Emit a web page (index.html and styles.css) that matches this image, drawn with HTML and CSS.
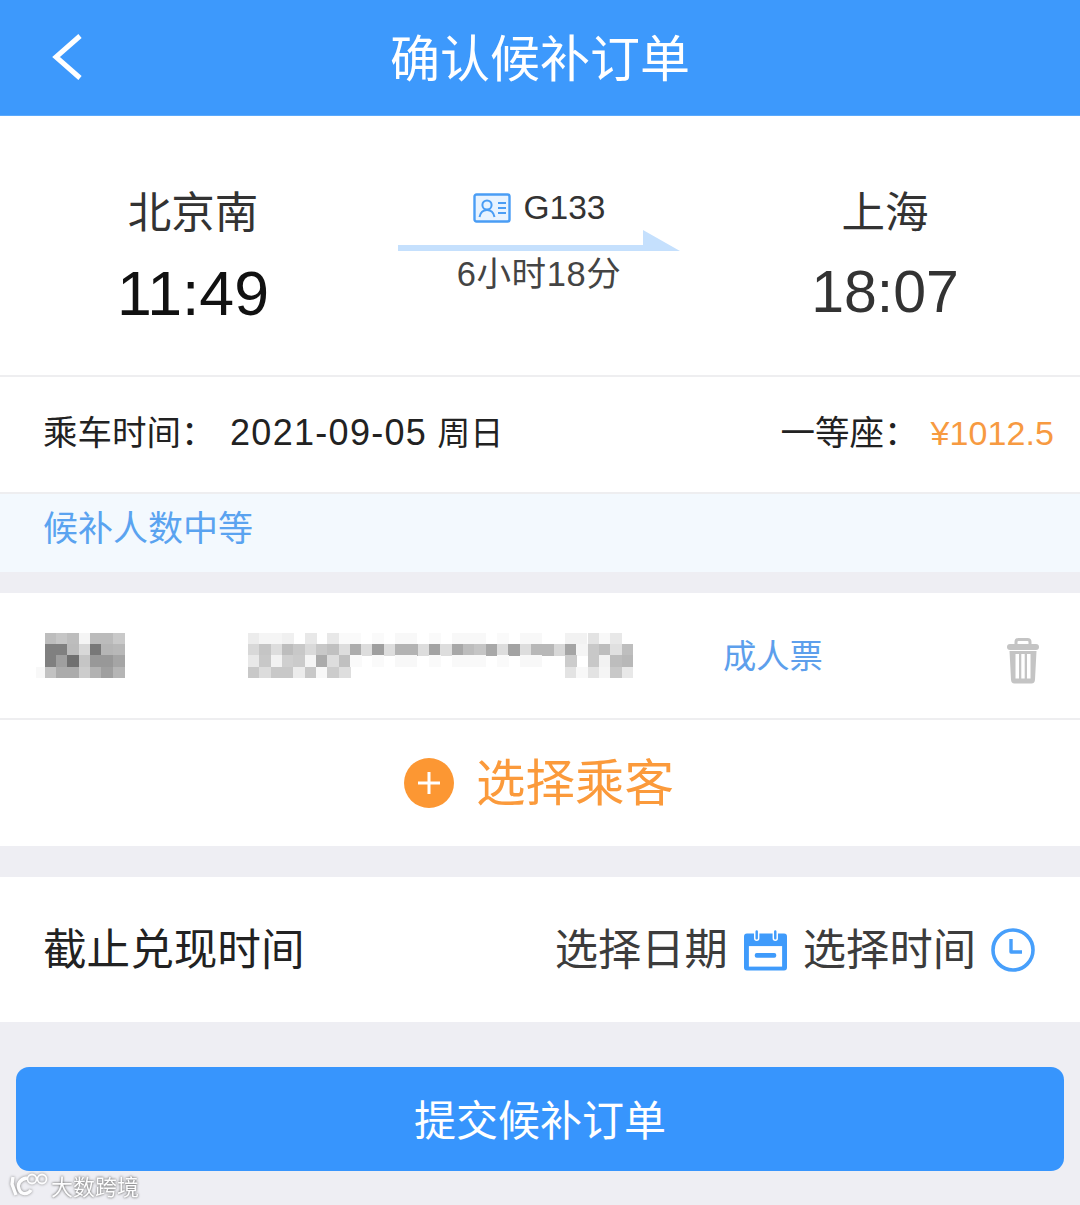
FILE: index.html
```
<!DOCTYPE html>
<html lang="zh-CN">
<head>
<meta charset="utf-8">
<title>确认候补订单</title>
<link rel="stylesheet" href="styles.css">
</head>
<body>
<div class="page">
  <header class="nav">
    <svg class="back" viewBox="0 0 32 46" width="32" height="46"><path d="M29 2 L5 23 L29 44" fill="none" stroke="#fff" stroke-width="5"/></svg>
    <h1 class="nav-title">确认候补订单</h1>
  </header>

  <section class="route">
    <div class="stop">
      <div class="stop-name">北京南</div>
      <div class="stop-time dark">11:49</div>
    </div>
    <div class="train">
      <div class="train-no">
        <svg class="id-icon" viewBox="0 0 38 30" width="38" height="30"><rect x="1.5" y="1.5" width="35" height="27" rx="2" fill="#e8f3ff" stroke="#4a9df5" stroke-width="2.4"/><circle cx="14" cy="12" r="4.6" fill="none" stroke="#4a9df5" stroke-width="2"/><path d="M6.5 24c1-5 4-7 7.500-7s6.500 2 7.500 7" fill="none" stroke="#4a9df5" stroke-width="2"/><path d="M25 10h8M25 15h8M25 20h8" stroke="#4a9df5" stroke-width="2"/></svg>
        <span>G133</span>
      </div>
      <svg class="arrow" viewBox="0 0 282 21" width="282" height="21"><path d="M0 15H245V0L282 21H0Z" fill="#c5e0fd"/></svg>
      <div class="duration">6小时18分</div>
    </div>
    <div class="stop">
      <div class="stop-name">上海</div>
      <div class="stop-time">18:07</div>
    </div>
  </section>

  <section class="ride">
    <div class="ride-date"><span class="label">乘车时间：</span><span class="date">2021-09-05</span><span class="week">周日</span></div>
    <div class="ride-seat"><span class="label">一等座：</span><span class="price">¥1012.5</span></div>
  </section>

  <div class="notice">候补人数中等</div>

  <section class="passenger">
    <svg class="mosaic name" viewBox="0 0 89 45" width="89" height="45">
      <rect x="-1" y="34" width="11" height="11" fill="#f8f8f8"/>
      <g>
        <rect x="9" y="0" width="12" height="12" fill="#bdbdbd"/><rect x="20" y="0" width="12" height="12" fill="#c6c6c6"/><rect x="31" y="0" width="12" height="12" fill="#bdbdbd"/><rect x="43" y="0" width="12" height="12" fill="#f5f5f5"/><rect x="54" y="0" width="12" height="12" fill="#bbb"/><rect x="65" y="0" width="12" height="12" fill="#bbb"/><rect x="77" y="0" width="12" height="12" fill="#c9c9c9"/>
        <rect x="9" y="11" width="12" height="12" fill="#808080"/><rect x="20" y="11" width="12" height="12" fill="#808080"/><rect x="31" y="11" width="12" height="12" fill="#bbb"/><rect x="43" y="11" width="12" height="12" fill="#d8d8d8"/><rect x="54" y="11" width="12" height="12" fill="#787878"/><rect x="65" y="11" width="12" height="12" fill="#b5b5b5"/><rect x="77" y="11" width="12" height="12" fill="#b8b8b8"/>
        <rect x="9" y="22" width="12" height="12" fill="#808080"/><rect x="20" y="22" width="12" height="12" fill="#9f9f9f"/><rect x="31" y="22" width="12" height="12" fill="#707070"/><rect x="43" y="22" width="12" height="12" fill="#c5c5c5"/><rect x="54" y="22" width="12" height="12" fill="#989898"/><rect x="65" y="22" width="12" height="12" fill="#989898"/><rect x="77" y="22" width="12" height="12" fill="#a5a5a5"/>
        <rect x="9" y="34" width="12" height="11" fill="#c2c2c2"/><rect x="20" y="34" width="12" height="11" fill="#ababab"/><rect x="31" y="34" width="12" height="11" fill="#ababab"/><rect x="43" y="34" width="12" height="11" fill="#ccc"/><rect x="54" y="34" width="12" height="11" fill="#b2b2b2"/><rect x="65" y="34" width="12" height="11" fill="#9f9f9f"/><rect x="77" y="34" width="12" height="11" fill="#b5b5b5"/>
      </g>
    </svg>
    <svg class="mosaic idno" viewBox="0 0 385 45" width="385" height="45">
      <g>
        <rect x="0" y="0" width="12" height="12" fill="#ececec"/><rect x="11" y="0" width="12" height="12" fill="#f5f5f5"/><rect x="23" y="0" width="12" height="12" fill="#f5f5f5"/><rect x="34" y="0" width="12" height="12" fill="#f0f0f0"/><rect x="57" y="0" width="12" height="12" fill="#e8e8e8"/><rect x="79" y="0" width="12" height="12" fill="#e8e8e8"/><rect x="91" y="0" width="22" height="12" fill="#fafafa"/><rect x="124" y="0" width="12" height="12" fill="#fafafa"/><rect x="147" y="0" width="22" height="12" fill="#f8f8f8"/><rect x="181" y="0" width="12" height="12" fill="#fafafa"/><rect x="204" y="0" width="34" height="12" fill="#f8f8f8"/><rect x="249" y="0" width="12" height="12" fill="#fafafa"/><rect x="272" y="0" width="22" height="12" fill="#f8f8f8"/><rect x="317" y="0" width="22" height="12" fill="#f2f2f2"/><rect x="340" y="0" width="12" height="12" fill="#e3e3e3"/><rect x="351" y="0" width="12" height="12" fill="#f8f8f8"/><rect x="362" y="0" width="12" height="12" fill="#e8e8e8"/>
        <rect x="0" y="11" width="12" height="12" fill="#d8d8d8"/><rect x="11" y="11" width="12" height="12" fill="#c5c5c5"/><rect x="23" y="11" width="12" height="12" fill="#ddd"/><rect x="34" y="11" width="12" height="12" fill="#bdbdbd"/><rect x="45" y="11" width="12" height="12" fill="#c8c8c8"/><rect x="57" y="11" width="12" height="12" fill="#dadada"/><rect x="68" y="11" width="12" height="12" fill="#c8c8c8"/><rect x="79" y="11" width="12" height="12" fill="#c0c0c0"/><rect x="91" y="11" width="12" height="12" fill="#ddd"/><rect x="102" y="11" width="12" height="12" fill="#adadad"/><rect x="113" y="11" width="12" height="12" fill="#ddd"/><rect x="124" y="11" width="12" height="12" fill="#9f9f9f"/><rect x="136" y="11" width="12" height="12" fill="#ddd"/><rect x="147" y="11" width="23" height="12" fill="#b3b3b3"/><rect x="170" y="11" width="12" height="12" fill="#ddd"/><rect x="181" y="11" width="12" height="12" fill="#a3a3a3"/><rect x="192" y="11" width="12" height="12" fill="#ddd"/><rect x="204" y="11" width="12" height="12" fill="#a8a8a8"/><rect x="215" y="11" width="12" height="12" fill="#bdbdbd"/><rect x="226" y="11" width="12" height="12" fill="#c5c5c5"/><rect x="238" y="11" width="12" height="12" fill="#a8a8a8"/><rect x="249" y="11" width="12" height="12" fill="#ddd"/><rect x="260" y="11" width="12" height="12" fill="#a3a3a3"/><rect x="272" y="11" width="12" height="12" fill="#ddd"/><rect x="283" y="11" width="23" height="12" fill="#b8b8b8"/><rect x="306" y="11" width="12" height="12" fill="#d8d8d8"/><rect x="317" y="11" width="12" height="12" fill="#a5a5a5"/><rect x="328" y="11" width="12" height="12" fill="#f5f5f5"/><rect x="340" y="11" width="12" height="12" fill="#c8c8c8"/><rect x="351" y="11" width="12" height="12" fill="#bdbdbd"/><rect x="362" y="11" width="12" height="12" fill="#e0e0e0"/><rect x="374" y="11" width="11" height="12" fill="#bebebe"/>
        <rect x="0" y="22" width="12" height="12" fill="#e8e8e8"/><rect x="11" y="22" width="12" height="12" fill="#c8c8c8"/><rect x="23" y="22" width="12" height="12" fill="#f2f2f2"/><rect x="34" y="22" width="12" height="12" fill="#cfcfcf"/><rect x="45" y="22" width="12" height="12" fill="#cbcbcb"/><rect x="57" y="22" width="12" height="12" fill="#f5f5f5"/><rect x="68" y="22" width="12" height="12" fill="#ababab"/><rect x="79" y="22" width="12" height="12" fill="#ddd"/><rect x="91" y="22" width="12" height="12" fill="#c0c0c0"/><rect x="102" y="22" width="12" height="12" fill="#fafafa"/><rect x="124" y="22" width="12" height="12" fill="#fafafa"/><rect x="147" y="22" width="22" height="12" fill="#f8f8f8"/><rect x="181" y="22" width="12" height="12" fill="#fafafa"/><rect x="204" y="22" width="34" height="12" fill="#f9f9f9"/><rect x="249" y="22" width="12" height="12" fill="#fafafa"/><rect x="272" y="22" width="22" height="12" fill="#f8f8f8"/><rect x="317" y="22" width="12" height="12" fill="#ccc"/><rect x="340" y="22" width="12" height="12" fill="#c8c8c8"/><rect x="351" y="22" width="12" height="12" fill="#f2f2f2"/><rect x="362" y="22" width="12" height="12" fill="#bdbdbd"/><rect x="374" y="22" width="11" height="12" fill="#b8b8b8"/>
        <rect x="0" y="34" width="12" height="11" fill="#c8c8c8"/><rect x="11" y="34" width="12" height="11" fill="#dcdcdc"/><rect x="23" y="34" width="23" height="11" fill="#c8c8c8"/><rect x="45" y="34" width="12" height="11" fill="#ececec"/><rect x="57" y="34" width="12" height="11" fill="#c8c8c8"/><rect x="68" y="34" width="12" height="11" fill="#f8f8f8"/><rect x="79" y="34" width="12" height="11" fill="#ccc"/><rect x="91" y="34" width="12" height="11" fill="#dedede"/><rect x="317" y="34" width="12" height="11" fill="#e3e3e3"/><rect x="328" y="34" width="12" height="11" fill="#f8f8f8"/><rect x="340" y="34" width="12" height="11" fill="#e3e3e3"/><rect x="351" y="34" width="12" height="11" fill="#f5f5f5"/><rect x="362" y="34" width="12" height="11" fill="#c8c8c8"/><rect x="374" y="34" width="11" height="11" fill="#e8e8e8"/>
      </g>
    </svg>
    <span class="ticket-type">成人票</span>
    <svg class="trash" viewBox="0 0 32 46" width="32" height="46"><path d="M9 7V4C9 2.500 10 1.500 11.500 1.500h9C22 1.500 23 2.500 23 4V7" fill="none" stroke="#c4c4c4" stroke-width="3"/><rect x="0" y="6" width="32" height="6" rx="3" fill="#c4c4c4"/><path d="M2.500 13H29.500L28 41.500C27.900 44 26.800 45.500 24.500 45.500H7.500C5.200 45.500 4.100 44 4 41.500Z" fill="#c4c4c4"/><path d="M8.500 16H12V40.500H8.500ZM14.300 16H17.700V40.500H14.300ZM20 16H23.500V40.500H20Z" fill="#fff"/></svg>
  </section>

  <button class="add" type="button">
    <svg class="plus" viewBox="0 0 50 50" width="50" height="50"><circle cx="25" cy="25" r="25" fill="#fc9733"/><path d="M25 14V36M14 25H36" stroke="#fff" stroke-width="3"/></svg>
    <span class="add-label">选择乘客</span>
  </button>

  <section class="deadline">
    <div class="deadline-label">截止兑现时间</div>
    <div class="pickers">
      <span class="picker-date">选择日期</span>
      <svg class="cal" viewBox="0 0 44 42" width="43" height="42"><path d="M3 4H41A3 3 0 0 1 44 7V39A3 3 0 0 1 41 42H3A3 3 0 0 1 0 39V7A3 3 0 0 1 3 4Z" fill="#3f9bfb"/><rect x="5" y="17" width="34" height="21" fill="#fff"/><rect x="11" y="0" width="4" height="11" rx="2" fill="#3f9bfb" stroke="#fff" stroke-width="1.500"/><rect x="30" y="0" width="4" height="11" rx="2" fill="#3f9bfb" stroke="#fff" stroke-width="1.500"/><rect x="11" y="24" width="22" height="5" rx="2" fill="#3f9bfb"/></svg>
      <span class="picker-time">选择时间</span>
      <svg class="clock" viewBox="0 0 44 44" width="44" height="44"><circle cx="22" cy="22" r="20" fill="#fff" stroke="#479ffb" stroke-width="3.600"/><path d="M20 11V24H31" fill="none" stroke="#479ffb" stroke-width="3.400" stroke-linejoin="round"/></svg>
    </div>
  </section>

  <button class="submit" type="button">提交候补订单</button>

  <div class="watermark">
    <svg class="wm-logo" viewBox="0 0 40 28" width="40" height="28"><g fill="none" stroke="#fff" stroke-width="3.400"><path d="M4 6L3 13L7 24"/><path d="M18 7C11 8 8 13 10 18C12 24 19 24 22 19"/><circle cx="23" cy="8" r="4.500" stroke-width="1.800"/><circle cx="33" cy="8" r="4.500" stroke-width="1.800"/></g></svg>
    <span>大数跨境</span>
  </div>
</div>
</body>
</html>
```
FILE: styles.css
```
* { box-sizing: border-box; }
html, body { margin: 0; padding: 0; }
body {
  background: #eeeef3;
  font-family: "Liberation Sans", "Noto Sans CJK SC", sans-serif;
  color: #333;
}
.page { position: relative; width: 1080px; height: 1205px; overflow: hidden; }

.nav {
  height: 116px;
  background: #3d99fc;
  display: flex;
  align-items: center;
  justify-content: center;
  position: relative;
  border-bottom: 1px solid #5aa9fc;
  padding-bottom: 6px;
}
.back { position: absolute; left: 51px; top: 34px; }
.nav-title {
  margin: 0;
  font-size: 50px;
  font-weight: 400;
  line-height: 1;
  color: #fff;
  font-family: "Noto Sans CJK SC", sans-serif;
}

.route {
  height: 259px;
  background: #fff;
  display: grid;
  grid-template-columns: 386px 306px 386px;
  padding-top: 70px;
}
.stop { display: flex; flex-direction: column; align-items: center; margin-top: -2px; }
.stop-name { font-size: 43.500px; line-height: 52px; color: #333; font-family: "Noto Sans CJK SC", sans-serif; }
.stop-time { font-size: 59px; line-height: 66px; margin-top: 23px; color: #333; }
.stop-time.dark { font-size: 62.600px; margin-top: 24px; color: #111; }
.train { display: flex; flex-direction: column; align-items: center; }
.train-no { display: flex; align-items: center; gap: 13px; font-size: 33.500px; line-height: 44px; height: 44px; color: #333; }
.id-icon { display: block; }
.arrow { display: block; }
.duration { font-size: 34.500px; line-height: 44px; margin-top: 1px; letter-spacing: .6px; color: #444; }

.ride {
  height: 119px;
  background: #fff;
  border-top: 2px solid #eeeef0;
  border-bottom: 2px solid #eeeef0;
  display: flex;
  align-items: center;
  justify-content: space-between;
  padding: 0 26px 10px 43px;
  font-size: 34.500px;
  color: #222;
}
.ride-date, .ride-seat { display: flex; align-items: baseline; }
.date { font-size: 36px; letter-spacing: 1.300px; margin-right: 10px; }
.week { font-size: 33px; }
.label { font-family: "Noto Sans CJK SC", sans-serif; }
.ride-date .label { width: 187px; }
.ride-seat .label { width: 150px; }
.price { color: #f79a41; font-size: 34px; letter-spacing: .1px; }

.notice {
  height: 78px;
  background: #f3f9fe;
  color: #5aa3f0;
  font-size: 35px;
  line-height: 64px;
  padding-left: 43px;
  font-family: "Noto Sans CJK SC", sans-serif;
}

.passenger {
  margin-top: 21px;
  height: 127px;
  background: #fff;
  border-bottom: 2px solid #eeeef0;
  display: flex;
  align-items: center;
  padding-left: 36px;
}
.mosaic { display: block; flex: none; filter: blur(.5px); }
.idno { margin-left: 123px; }
.ticket-type { margin-left: 90px; padding-bottom: 5px; font-size: 33.300px; color: #5d9fec; font-family: "Noto Sans CJK SC", sans-serif; }
.trash { margin-left: 184px; margin-top: 11px; }

.add {
  width: 100%;
  height: 126px;
  background: #fff;
  border: 0;
  padding: 0;
  display: flex;
  align-items: center;
  justify-content: center;
  gap: 22px;
  font: inherit;
  font-size: 49.500px;
  color: #fb9a3b;
  font-family: "Noto Sans CJK SC", sans-serif;
}
.add-label { padding-bottom: 8px; }
.plus { display: block; margin-left: -2px; }

.deadline {
  margin-top: 31px;
  height: 145px;
  background: #fff;
  display: flex;
  align-items: center;
  justify-content: space-between;
  padding: 0 45px 0 43px;
  font-size: 43.600px;
  font-family: "Noto Sans CJK SC", sans-serif;
}
.deadline-label { color: #222; padding-bottom: 7px; }
.pickers { display: flex; align-items: center; color: #3c3c3c; font-size: 43.300px; }
.picker-date, .picker-time { padding-bottom: 7px; }
.cal { margin-left: 16px; display: block; }
.picker-time { margin-left: 16px; }
.clock { margin-left: 15px; display: block; }

.submit {
  display: block;
  width: 1048px;
  height: 104px;
  margin: 45px 16px 0;
  padding: 0 0 4px;
  background: #3795fd;
  border: 0;
  border-radius: 13px;
  color: #fff;
  font-size: 42px;
  font-family: "Noto Sans CJK SC", sans-serif;
}

.watermark {
  position: absolute;
  left: 9px;
  top: 1171px;
  display: flex;
  align-items: center;
  gap: 2px;
  color: #fff;
  font-size: 22px;
  line-height: 28px;
  font-family: "Noto Sans CJK SC", sans-serif;
  text-shadow: 0 0 3px #666, 0 0 2px #888;
  opacity: .92;
}
.wm-logo { display: block; filter: drop-shadow(0 0 1.500px #777); }
```
